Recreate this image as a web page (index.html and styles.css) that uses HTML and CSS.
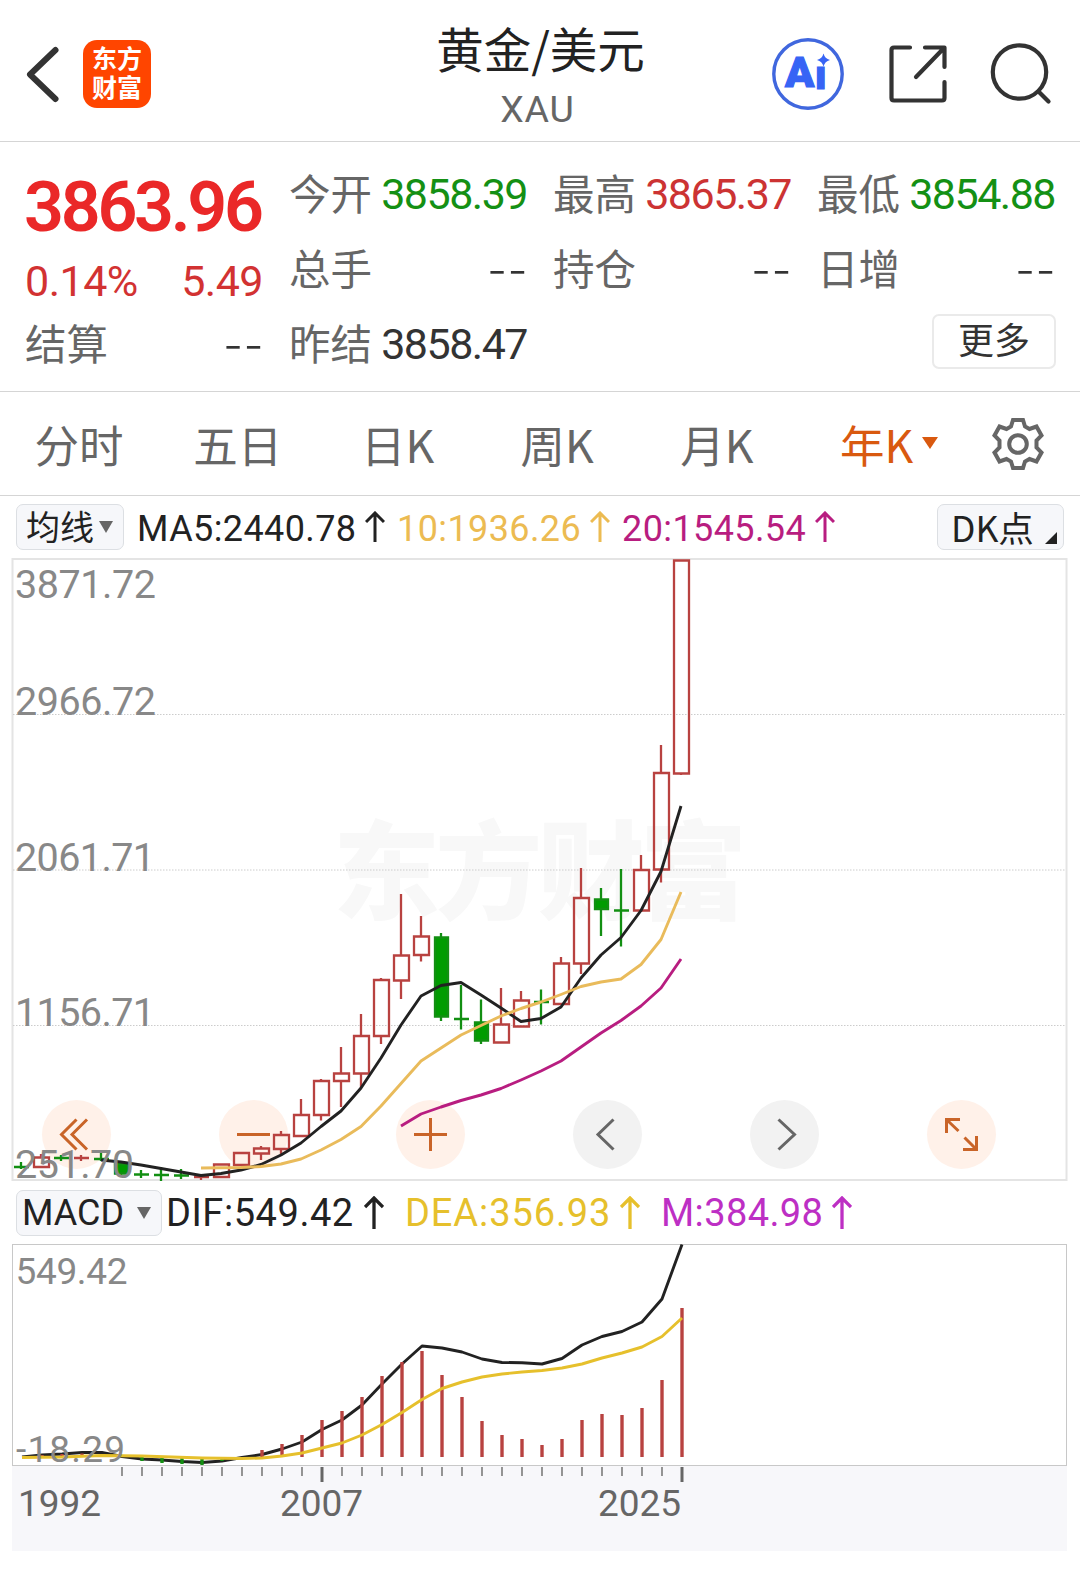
FILE: index.html
```html
<!DOCTYPE html>
<html lang="zh-CN">
<head>
    <meta charset="UTF-8">
    <meta name="viewport" content="width=device-width, initial-scale=1.0">
    <title>黄金/美元 XAU</title>
    <link rel="stylesheet" href="styles.css">
</head>
<body>
    <header class="topbar">
        <svg class="back" width="36" height="60" viewBox="24 44 36 60"><path d="M55.5 50 30 74.500 55.500 99"/></svg>
        <div class="logo"><span>东方</span><span>财富</span></div>
        <div class="title">
            <h1>黄金/美元</h1>
            <p>XAU</p>
        </div>
        <div class="actions">
            <svg width="76" height="76" viewBox="0 0 76 76">
                <circle cx="38" cy="38" r="34.2" fill="none" stroke="#4067de" stroke-width="3.400"/>
                <text class="ai" x="15" y="51" textLength="29">A</text>
                <text class="ai small" x="45" y="52.500">ı</text>
                <path d="M53.500 17.500Q54.800 22.700 60 24 54.800 25.300 53.500 30.500 52.200 25.300 47 24 52.200 22.700 53.500 17.500Z" fill="#3764f5"/>
            </svg>
            <svg class="line" width="60" height="60" viewBox="0 0 60 60">
                <path d="M22 3.500H6Q3.500 3.500 3.500 6V54Q3.500 56.500 6 56.500H54Q56.500 56.500 56.500 54V38M37 3.500H56.500V23M56 4 28 33"/>
            </svg>
            <svg class="line" width="62" height="62" viewBox="0 0 62 62">
                <circle cx="29.500" cy="29" r="26.700"/>
                <path d="M48.500 48.500 58.500 58.500"/>
            </svg>
        </div>
    </header>

    <section class="quote">
        <div class="now">
            <div class="price">3863.96</div>
            <div class="change"><span>0.14%</span><span>5.49</span></div>
        </div>
        <div class="item"><label>今开</label><b class="down">3858.39</b></div>
        <div class="item"><label>最高</label><b class="up">3865.37</b></div>
        <div class="item"><label>最低</label><b class="down">3854.88</b></div>
        <div class="item"><label>总手</label><b class="none">--</b></div>
        <div class="item"><label>持仓</label><b class="none">--</b></div>
        <div class="item"><label>日增</label><b class="none">--</b></div>
        <div class="item"><label>结算</label><b class="none">--</b></div>
        <div class="item"><label>昨结</label><b>3858.47</b></div>
        <div class="more-cell"><button class="more">更多</button></div>
    </section>

    <nav class="tabs">
        <span>分时</span>
        <span>五日</span>
        <span>日K</span>
        <span>周K</span>
        <span>月K</span>
        <span class="active">年K<i></i></span>
        <svg width="54" height="54" viewBox="-27 -27 54 54">
            <path d="M-5-24H5L7-17.500 11.500-15 18.500-17.500 23.500-8.500 18.500-3.500V3.500L23.500 8.500 18.500 17.500 11.500 15 7 17.500 5 24H-5L-7 17.500-11.500 15-18.500 17.500-23.500 8.500-18.500 3.500V-3.500L-23.500-8.500-18.500-17.500-11.500-15-7-17.500Z"/>
            <circle r="8.800"/>
        </svg>
    </nav>

    <div class="legend ma">
        <button class="pick"><span>均线</span><i></i></button>
        <span class="val v5">MA5:2440.78</span>
        <svg class="arrow" width="20" height="32" viewBox="0 0 20 32"><path d="M10 31V2M1 11 10 2 19 11"/></svg>
        <span class="val v10">10:1936.26</span>
        <svg class="arrow v10" width="20" height="32" viewBox="0 0 20 32"><path d="M10 31V2M1 11 10 2 19 11"/></svg>
        <span class="val v20">20:1545.54</span>
        <svg class="arrow v20" width="20" height="32" viewBox="0 0 20 32"><path d="M10 31V2M1 11 10 2 19 11"/></svg>
        <button class="dk">DK点<i></i></button>
    </div>

    <svg class="chart" width="1080" height="630" viewBox="0 555 1080 630">
        <text class="mark" x="333" y="911" textLength="414">东方财富</text>
        <rect class="frame" x="12.500" y="559" width="1054" height="621"/>
        <path class="dots" d="M13 714.500H1066M13 870H1066M13 1025.500H1066"/>
        <g class="tools">
            <circle cx="76.500" cy="1134.500" r="34.500"/>
            <circle cx="253.500" cy="1134.500" r="34.500"/>
            <circle cx="430.500" cy="1134.500" r="34.500"/>
            <circle class="gray" cx="607.500" cy="1134.500" r="34.500"/>
            <circle class="gray" cx="784.500" cy="1134.500" r="34.500"/>
            <circle cx="961.500" cy="1134.500" r="34.500"/>
            <path d="M76.500 1119.500 61.500 1134.500 76.500 1149.500M87 1119.500 72 1134.500 87 1149.500"/>
            <path d="M237 1134.500H270M414 1134.500H447M430.500 1118V1151"/>
            <path class="gray" d="M613.500 1119.500 598 1134.500 613.500 1149.500M778.500 1119.500 794.500 1134.500 778.500 1149.500"/>
            <path d="M946.500 1133V1119.500H960M947 1120 958.500 1131M963 1149.500H976.500V1136M976 1149 964.500 1137.500"/>
        </g>
        <g id="candles"></g>
        <polyline class="k5" points="101,1160 121,1162 141,1165 161,1168.500 181,1172 201,1175.500 221,1173.500 241,1170 261,1164.500 281,1155 301,1143 321,1126.500 341,1111 361,1088 381,1058 401,1025 421,996 441,985.500 461,982.500 481,995 501,1008 521,1021.500 541,1018.500 561,1007 581,978 601,955 621,937.500 641,910.500 661,871.500 681,806"/>
        <polyline class="k10" points="201,1168 241,1167.500 261,1166.500 281,1164 301,1159 321,1150 341,1139.500 361,1126.500 381,1106 401,1083.500 421,1061 441,1048 461,1035 481,1025.500 501,1016 521,1008.500 541,1002 561,994.500 581,986.500 601,982 621,979 641,964.500 661,939.500 681,892"/>
        <polyline class="k20" points="401,1126 421,1114 441,1107 461,1100.500 481,1095 501,1088.500 521,1080 541,1071 561,1061 581,1047 601,1033 621,1020.500 641,1006 661,988 681,959"/>
        <g class="scale">
            <text x="15" y="597.500" textLength="141">3871.72</text>
            <text x="15" y="714.500" textLength="141">2966.72</text>
            <text x="15" y="870.500" textLength="140">2061.71</text>
            <text x="15" y="1026" textLength="140">1156.71</text>
            <text x="15" y="1177.500" textLength="119">251.70</text>
        </g>
    </svg>

    <div class="legend macd">
        <button class="pick"><span>MACD</span><i></i></button>
        <span class="val dif">DIF:549.42</span>
        <svg class="arrow" width="20" height="34" viewBox="0 0 20 34"><path d="M10 33V2M1 11 10 2 19 11"/></svg>
        <span class="val dea">DEA:356.93</span>
        <svg class="arrow dea" width="20" height="34" viewBox="0 0 20 34"><path d="M10 33V2M1 11 10 2 19 11"/></svg>
        <span class="val m">M:384.98</span>
        <svg class="arrow m" width="20" height="34" viewBox="0 0 20 34"><path d="M10 33V2M1 11 10 2 19 11"/></svg>
    </div>

    <svg class="chart" width="1080" height="330" viewBox="0 1241 1080 330">
        <rect x="12" y="1466" width="1055" height="85" fill="#f7f7fa"/>
        <rect class="frame dark" x="12.500" y="1244.500" width="1054" height="221"/>
        <polyline class="k5" points="22,1457 42,1455 62,1454 82,1452.500 102,1452.500 122,1456.500 142,1459 162,1460 182,1461.500 202,1462.500 222,1461 242,1457.500 262,1454.500 282,1449 302,1442 322,1429.500 342,1420 362,1405 382,1384 402,1364 422,1346 442,1348 462,1352 482,1359 502,1362.500 522,1362.700 542,1364 562,1358.500 582,1345 602,1336.500 622,1331.500 642,1322 662,1299 682,1244.500"/>
        <g id="bars"></g>
        <polyline class="kdea" points="22,1457.500 62,1457 102,1455.500 142,1456 202,1458 242,1458.500 262,1458 282,1456 302,1453 322,1448 342,1443 362,1435 382,1424.500 402,1412.500 422,1399.500 442,1388.500 462,1382 482,1377 502,1374 522,1372 542,1370.500 562,1368 582,1364 602,1358 622,1353 642,1347 662,1336.500 682,1318"/>
        <g class="scale small">
            <text x="15.500" y="1284" textLength="112">549.42</text>
            <text x="16" y="1461.500" textLength="109">-18.29</text>
        </g>
        <g class="scale year">
            <text x="18" y="1516" textLength="83">1992</text>
            <text x="280" y="1516" textLength="83">2007</text>
            <text x="598" y="1516" textLength="83">2025</text>
        </g>
    </svg>

    <script src="chart.js"></script>
</body>
</html>
```
FILE: styles.css
```css
* {
    box-sizing: border-box;
}

body {
    width: 1080px;
    margin: 0;
    background-color: #fff;
    color: #222;
    font-family: Roboto, "Noto Sans CJK SC", sans-serif;
    overflow: hidden;
}

h1, p {
    margin: 0;
    font-weight: 400;
}

svg {
    display: block;
    flex: none;
}

button {
    font-family: inherit;
    color: #222;
    padding: 0;
}

/* top bar */
.topbar {
    display: grid;
    grid-template-columns: 36px 68px 1fr 280px;
    align-items: center;
    height: 142px;
    padding: 7px 28px 0 24px;
    border-bottom: 1px solid #d5d5d5;
}

.back path {
    fill: none;
    stroke: #333;
    stroke-width: 6;
    stroke-linecap: round;
    stroke-linejoin: round;
}

.logo {
    display: flex;
    flex-direction: column;
    align-items: center;
    justify-content: center;
    width: 68px;
    height: 68px;
    margin-left: 23px;
    border-radius: 14px;
    background-color: #ff4500;
    color: #fff;
    font-size: 25px;
    font-weight: 700;
    line-height: 29px;
}

.title {
    text-align: center;
    margin-left: 56px;
    margin-right: -125px;
    margin-top: 8px;
}

.title h1 {
    font-size: 47.5px;
    line-height: 62px;
    font-family: "Noto Sans CJK SC", sans-serif;
}

.title p {
    margin-left: -6px;
    font-size: 37.5px;
    line-height: 60px;
    letter-spacing: 0.8px;
    color: #666;
}

.actions {
    display: flex;
    align-items: center;
    justify-content: flex-end;
    gap: 42px;
    z-index: 1;
}

.ai {
    font: 900 43px Roboto, sans-serif;
    fill: #3764f5;
    stroke: #3764f5;
    stroke-width: 1.2;
}

.ai.small {
    font-size: 40px;
}

.line {
    fill: none;
    stroke: #333;
    stroke-width: 4.2;
    stroke-linecap: round;
    stroke-linejoin: round;
}

/* quote */
.quote {
    display: grid;
    grid-template-columns: repeat(4, 238px);
    grid-template-rows: repeat(3, 75px);
    column-gap: 26px;
    height: 250px;
    padding: 14px 25px 0;
    border-bottom: 1px solid #d5d5d5;
}

.now {
    grid-row: span 2;
    color: #ea2828;
}

.price {
    margin: 10px 0 0 -1px;
    font-size: 70px;
    font-weight: 600;
    line-height: 82px;
    letter-spacing: -3.3px;
}

.change {
    display: flex;
    justify-content: space-between;
    font-size: 43px;
    line-height: 50px;
    letter-spacing: -0.5px;
    color: #d23232;
    margin-top: 8px;
}

.item {
    display: flex;
    align-items: center;
    justify-content: space-between;
    height: 75px;
    line-height: 75px;
    font-size: 43px;
}

.item label {
    font-size: 41.5px;
    color: #666;
    padding-top: 3px;
}

.item b {
    font-weight: 400;
    letter-spacing: -1.5px;
    color: #333;
    padding-top: 2px;
}

.item .up {
    color: #cc3333;
}

.item .down {
    color: #149014;
}

.item .none {
    font-family: "Noto Sans CJK SC", sans-serif;
    font-size: 54px;
    font-weight: 300;
    letter-spacing: 2.5px;
    padding-top: 0;
    margin-top: -10px;
    margin-right: -2px;
}

.more-cell {
    grid-column: 4;
    display: flex;
    justify-content: flex-end;
    padding-top: 8px;
}

.more {
    width: 124px;
    height: 55px;
    margin-right: -1px;
    border: 2px solid #eaeaea;
    border-radius: 7px;
    background-color: #fff;
    font-size: 36px;
    line-height: 46px;
    color: #333;
}

/* period tabs */
.tabs {
    display: grid;
    grid-template-columns: 158px repeat(5, 159.7px) 1fr;
    align-items: center;
    justify-items: center;
    height: 104px;
    border-bottom: 1px solid #d5d5d5;
    font-family: "Noto Sans CJK SC", sans-serif;
    font-size: 44.5px;
    color: #666;
}

.tabs span {
    position: relative;
    line-height: 60px;
}

.tabs .active {
    color: #d9590f;
}

.tabs i {
    position: absolute;
    left: 82px;
    top: 23px;
    border: 8px solid transparent;
    border-top: 12px solid #d9590f;
    border-bottom: 0;
}

.tabs svg {
    fill: none;
    stroke: #666;
    stroke-width: 4;
}

/* indicator rows */
.legend {
    display: flex;
    align-items: center;
    white-space: nowrap;
}

.legend button {
    display: flex;
    align-items: center;
    height: 46px;
    border: 1px solid #dcdfe3;
    border-radius: 7px;
    background-color: #f6f7fa;
    font-size: 34px;
    line-height: 44px;
}

.pick i {
    border: 7.5px solid transparent;
    border-top: 12px solid #666;
    border-bottom: 0;
}

.arrow {
    fill: none;
    stroke: #222;
    stroke-width: 3;
}

.ma {
    height: 59px;
    padding: 2px 16px 0;
    font-size: 36px;
}

.ma .pick {
    width: 108px;
    padding-left: 9px;
    gap: 5px;
    margin-right: 13px;
}

.ma .pick span {
    padding-top: 3px;
}

.ma .val {
    width: 228px;
    padding-top: 4px;
    letter-spacing: 0.4px;
}

.ma .v10.val,
.ma .v20.val {
    width: 193px;
}

.ma .arrow {
    margin-right: 12px;
}

.v10 {
    color: #ecbb52;
    stroke: #ecbb52;
}

.v20 {
    color: #b81d80;
    stroke: #b81d80;
}

.legend .dk {
    position: relative;
    width: 127px;
    margin-left: auto;
    padding-left: 13px;
    font-family: "Noto Sans CJK SC", sans-serif;
    font-size: 35.5px;
    line-height: 38px;
}

.dk i {
    position: absolute;
    right: 6px;
    bottom: 5px;
    border-left: 12px solid transparent;
    border-bottom: 12px solid #222;
}

.macd {
    height: 56px;
    padding: 0 16px;
    font-size: 38px;
}

.macd .pick {
    width: 146px;
    padding-left: 5px;
    gap: 13px;
    font-size: 36px;
    margin-right: 4px;
}

.macd .val {
    width: 198px;
    letter-spacing: 0.55px;
}

.macd .dea.val {
    width: 215px;
    letter-spacing: 0.9px;
}

.macd .m.val {
    width: 171px;
    letter-spacing: 0.4px;
}

.macd .dea {
    color: #e6c02c;
    stroke: #e6c02c;
}

.macd .m {
    color: #bd2fc4;
    stroke: #bd2fc4;
}

.macd .arrow {
    stroke-width: 3.3;
    margin-right: 21px;
}

/* charts */
.chart {
    overflow: visible;
}

.mark {
    font: 900 107px "Noto Sans CJK SC", sans-serif;
    fill: #f8f8f8;
}

.frame {
    fill: none;
    stroke: #e4e4e4;
    stroke-width: 2;
}

.frame.dark {
    stroke: #c8c8c8;
    stroke-width: 1;
}

.dots {
    stroke: #ccc;
    stroke-dasharray: 1.5 1.5;
}

.tools circle {
    fill: #fff1e9;
}

.tools circle.gray {
    fill: #f2f2f2;
}

.tools path {
    fill: none;
    stroke: #c96428;
    stroke-width: 3;
}

.tools path.gray {
    stroke: #666;
}

.red {
    fill: none;
    stroke: #b84240;
    stroke-width: 2.3;
}

.green {
    fill: #009c00;
    stroke: #128f12;
    stroke-width: 2.3;
}

.bar {
    stroke-width: 3.4;
}

.tick {
    stroke: #888;
    stroke-width: 1.8;
}

.tick.major {
    stroke: #666;
    stroke-width: 3;
}

polyline {
    fill: none;
    stroke-width: 2.9;
    stroke-linejoin: round;
}

.k5 {
    stroke: #222;
}

.k10 {
    stroke: #e9bb5b;
}

.k20 {
    stroke: #b81d80;
}

.kdea {
    stroke: #e6c02c;
}

.scale {
    font-size: 39.5px;
    fill: #888;
}

.scale.small {
    font-size: 37px;
}

.scale.year {
    font-size: 37px;
    fill: #666;
}
```
FILE: chart.js
```js
// [high, body top, body bottom, low, colour]
const candles = [
    [1162, 1167, 1167, 1169, 'g'],
    [1154, 1157.5, 1167, 1168, 'r'],
    [1155, 1158, 1158, 1161, 'g'],
    [1155, 1158, 1158, 1161, 'r'],
    [1153, 1159, 1159, 1161, 'g'],
    [1162, 1164, 1173.5, 1175, 'g'],
    [1170, 1174.5, 1174.5, 1178, 'g'],
    [1167, 1175, 1175, 1181, 'g'],
    [1169, 1175.5, 1175.5, 1179, 'g'],
    [1174, 1177, 1177, 1180, 'r'],
    [1164, 1164.5, 1177, 1177, 'r'],
    [1152, 1153, 1165, 1165, 'r'],
    [1146, 1148.5, 1153.5, 1160, 'r'],
    [1131, 1135, 1149, 1154, 'r'],
    [1099, 1115, 1136, 1136, 'r'],
    [1079, 1081, 1115, 1120.5, 'r'],
    [1047, 1073.5, 1081, 1107, 'r'],
    [1014, 1036, 1073.5, 1087, 'r'],
    [978, 980, 1036, 1044, 'r'],
    [894, 955.5, 980.5, 999, 'r'],
    [916, 936.5, 955, 961.5, 'r'],
    [933, 937.5, 1016.5, 1021, 'g'],
    [985, 1019, 1019, 1029.5, 'g'],
    [999.5, 1022.5, 1040.5, 1044, 'g'],
    [988, 1024.5, 1042.5, 1042.5, 'r'],
    [991, 1000.5, 1026.5, 1027, 'r'],
    [989.5, 1002, 1002, 1024.5, 'g'],
    [957, 963.5, 1004, 1004, 'r'],
    [868, 898, 963.5, 974, 'r'],
    [888, 899.5, 909, 936, 'g'],
    [869, 910.5, 910.5, 946.5, 'g'],
    [855, 870, 910.5, 912, 'r'],
    [745, 773, 869.5, 882.5, 'r'],
    [560, 560.5, 773.5, 775, 'r']
];

let out = '';
candles.forEach(([high, top, bottom, low, colour], i) => {
    const x = 21 + i * 20;
    const name = colour === 'r' ? 'red' : 'green';
    if (top === bottom) {
        out += `<path class="${name}" d="M${x} ${high}V${low}M${x - 7} ${top}H${x + 8}"/>`;
    } else {
        const pad = colour === 'r' ? 7.5 : 6.5;
        out += `<path class="${name}" d="M${x} ${high}V${top}M${x} ${bottom}V${low}M${x + 0.5 - pad} ${top}h${pad * 2}V${bottom}h${-pad * 2}Z"/>`;
    }
});
document.getElementById('candles').innerHTML = out;

// MACD histogram, zero line at 1457
const zero = 1457;
const bars = [1457, 1455, 1454, 1453.5, 1454, 1457, 1461, 1463, 1464, 1465, 1461, 1457,
    1450, 1444, 1435, 1420, 1411, 1397, 1376, 1362, 1351, 1375, 1397, 1421, 1435,
    1439, 1445, 1439, 1420, 1414, 1415, 1408, 1380, 1308];

out = '';
bars.forEach((y, i) => {
    const x = 22 + i * 20;
    if (y !== zero) {
        out += `<path class="${y < zero ? 'red' : 'green'} bar" d="M${x} ${zero}V${y}"/>`;
    }
    if (i > 4) {
        const major = i === 15 || i === 33;
        out += `<path class="tick${major ? ' major' : ''}" d="M${x} 1467V${major ? 1482 : 1476}"/>`;
    }
});
document.getElementById('bars').innerHTML = out;
```
